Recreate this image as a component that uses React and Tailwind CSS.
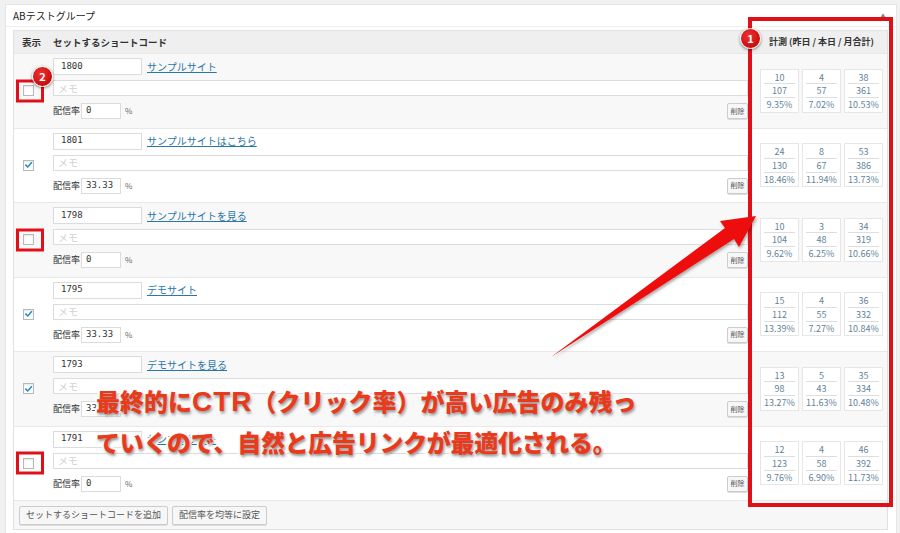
const ROWS = [
  { code: '1800', link: 'サンプルサイト', rate: '0', checked: false, mark: true, stats: [['10', '107', '9.35%'], ['4', '57', '7.02%'], ['38', '361', '10.53%']] },
  { code: '1801', link: 'サンプルサイトはこちら', rate: '33.33', checked: true, stats: [['24', '130', '18.46%'], ['8', '67', '11.94%'], ['53', '386', '13.73%']] },
  { code: '1798', link: 'サンプルサイトを見る', rate: '0', checked: false, mark: true, stats: [['10', '104', '9.62%'], ['3', '48', '6.25%'], ['34', '319', '10.66%']] },
  { code: '1795', link: 'デモサイト', rate: '33.33', checked: true, stats: [['15', '112', '13.39%'], ['4', '55', '7.27%'], ['36', '332', '10.84%']] },
  { code: '1793', link: 'デモサイトを見る', rate: '33.33', checked: true, stats: [['13', '98', '13.27%'], ['5', '43', '11.63%'], ['35', '334', '10.48%']] },
  { code: '1791', link: 'サンプルサイト', rate: '0', checked: false, mark: true, stats: [['12', '123', '9.76%'], ['4', '58', '6.90%'], ['46', '392', '11.73%']] },
]

const sans = "font-['Noto_Sans_CJK_JP','Noto_Sans',sans-serif]"
const mono = "font-['DejaVu_Sans_Mono','Liberation_Mono',monospace]"

function Checkbox({ checked }) {
  return (
    <div className="w-[11px] h-[11px] border border-[#b4b9be] bg-white shadow-[inset_0_1px_2px_rgba(0,0,0,0.1)] flex items-center justify-center">
      {checked && (
        <svg viewBox="0 0 12 12" className="w-[10px] h-[10px]" fill="none" stroke="#1e8cbe" strokeWidth="2">
          <path d="M2.5 6.2 5 8.6 9.8 3" strokeLinecap="square" />
        </svg>
      )}
    </div>
  )
}

function StatBox({ vals }) {
  return (
    <div className="w-[39px] h-[44px] border border-[#e6e6e6] bg-white flex flex-col items-center pt-[1px]">
      {vals.map((v, i) => (
        <div key={i} className={`w-[31px] h-[14px] flex items-center justify-center text-[9px] text-[#62849a] leading-none ${i < 2 ? 'border-b border-[#dedede]' : ''}`}>
          {v}
        </div>
      ))}
    </div>
  )
}

function Row({ row, idx }) {
  return (
    <div className={`flex h-[74.5px] border-t border-[#e8e8e8] ${idx % 2 === 0 ? 'bg-[#f8f8f8]' : 'bg-white'}`}>
      <div className="w-[39px] relative flex items-center pl-[9px]">
        <Checkbox checked={row.checked} />
        {row.mark && (
          <div className="absolute left-[2px] top-1/2 -translate-y-1/2 w-[28px] h-[23px] border-[3px] border-[#e0101a]" />
        )}
      </div>
      <div className="w-[695px] pt-[4px] flex flex-col">
        <div className="flex items-center h-[17px]">
          <div className={`w-[89px] h-[17px] border border-[#dcdcdc] bg-white px-[7px] flex items-center text-[9px] text-[#333] ${mono}`}>{row.code}</div>
          <span className="ml-[5px] text-[10px] text-[#2a76a6] underline leading-none">{row.link}</span>
        </div>
        <div className="mt-[5px] h-[16px] border border-[#dcdcdc] bg-white pl-[4px] flex items-center text-[10px] text-[#d2d2d2]">メモ</div>
        <div className="mt-[7px] flex items-center h-[16px]">
          <span className="text-[9px] text-[#333]">配信率</span>
          <div className={`ml-[1px] w-[40px] h-[16px] border border-[#dcdcdc] bg-white pl-[4px] flex items-center text-[9px] text-[#333] ${mono}`}>{row.rate}</div>
          <span className="ml-[4px] text-[8px] text-[#666]">%</span>
          <div className="ml-auto w-[21px] h-[16px] border border-[#ccc] bg-[#f7f7f7] rounded-[2px] flex items-center justify-center text-[7px] text-[#555] shadow-[0_1px_0_#ddd]">削除</div>
        </div>
      </div>
      <div className="flex-1 flex items-center justify-center gap-[3px] pl-[8px]">
        {row.stats.map((s, i) => <StatBox key={i} vals={s} />)}
      </div>
    </div>
  )
}

function Badge({ n, className }) {
  return (
    <div className={`absolute w-[21px] h-[21px] rounded-full bg-[radial-gradient(circle_at_40%_35%,#f03030,#b80000)] border border-white shadow-[0_1px_3px_rgba(0,0,0,0.5)] flex items-center justify-center text-white text-[11px] font-bold leading-none ${className}`}>
      {n}
    </div>
  )
}

export default function App() {
  return (
    <div className={`relative w-[900px] h-[533px] bg-[#f1f1f1] overflow-hidden ${sans}`}>
      <div className="ml-[5px] mt-[4px] w-[892px] bg-white border border-[#e5e5e5]">
        <div className="h-[22px] border-b border-[#eeeeee] px-[7px] flex items-center justify-between">
          <span className="text-[10px] text-[#222]">ABテストグループ</span>
          <span className="text-[6px] text-[#888] mr-[3px]">▲</span>
        </div>
        <div className="px-[7px] pt-[3px] pb-[6px]">
          <div className="w-[875px] border border-[#e1e1e1]">
            <div className="flex h-[22px] bg-[#efefef] items-center text-[9.5px] font-semibold text-[#333]">
              <div className="w-[39px] pl-[8px]">表示</div>
              <div className="w-[695px]">セットするショートコード</div>
              <div className="flex-1 text-center pl-[8px] text-[9px]">計測 (昨日 / 本日 / 月合計)</div>
            </div>
            {ROWS.map((r, i) => <Row key={i} row={r} idx={i} />)}
            <div className="h-[29px] bg-[#f7f7f7] border-t border-[#e8e8e8] flex items-center gap-[4px] pl-[5px]">
              <div className="h-[19px] px-[6px] border border-[#cccccc] bg-[#f7f7f7] rounded-[2px] shadow-[0_1px_0_#ddd] flex items-center text-[9px] text-[#555]">セットするショートコードを追加</div>
              <div className="h-[19px] px-[6px] border border-[#cccccc] bg-[#f7f7f7] rounded-[2px] shadow-[0_1px_0_#ddd] flex items-center text-[9px] text-[#555]">配信率を均等に設定</div>
            </div>
          </div>
        </div>
      </div>

      {/* annotations */}
      <div className="absolute left-[748px] top-[17px] w-[145px] h-[490px] border-[4px] border-[#e0101a]" />
      <Badge n="1" className="left-[740px] top-[28px]" />
      <Badge n="2" className="left-[32px] top-[66px]" />

      <svg className="absolute inset-0 pointer-events-none" width="900" height="533" viewBox="0 0 900 533">
        <defs>
          <filter id="sh" x="-10%" y="-10%" width="120%" height="120%">
            <feDropShadow dx="1" dy="2" stdDeviation="1.5" floodColor="#000" floodOpacity="0.35" />
          </filter>
        </defs>
        <polygon points="551,357 725,228 720,221 756,216 739,247 734,239" fill="#ee1010" filter="url(#sh)" />
      </svg>

      <div className="absolute left-[96px] top-[381px] text-[24px] font-black leading-[40px] text-[#ea3a1c] [-webkit-text-stroke:4px_white] [paint-order:stroke_fill] [text-shadow:1px_2px_3px_rgba(0,0,0,0.45)] whitespace-nowrap">
        <div>最終的に<span className="text-[28px] tracking-[1px] font-['Liberation_Sans',sans-serif]">CTR</span>（クリック率）が高い広告のみ残っ</div>
        <div className="tracking-[-0.3px]">ていくので、自然と広告リンクが最適化される。</div>
      </div>
    </div>
  )
}
